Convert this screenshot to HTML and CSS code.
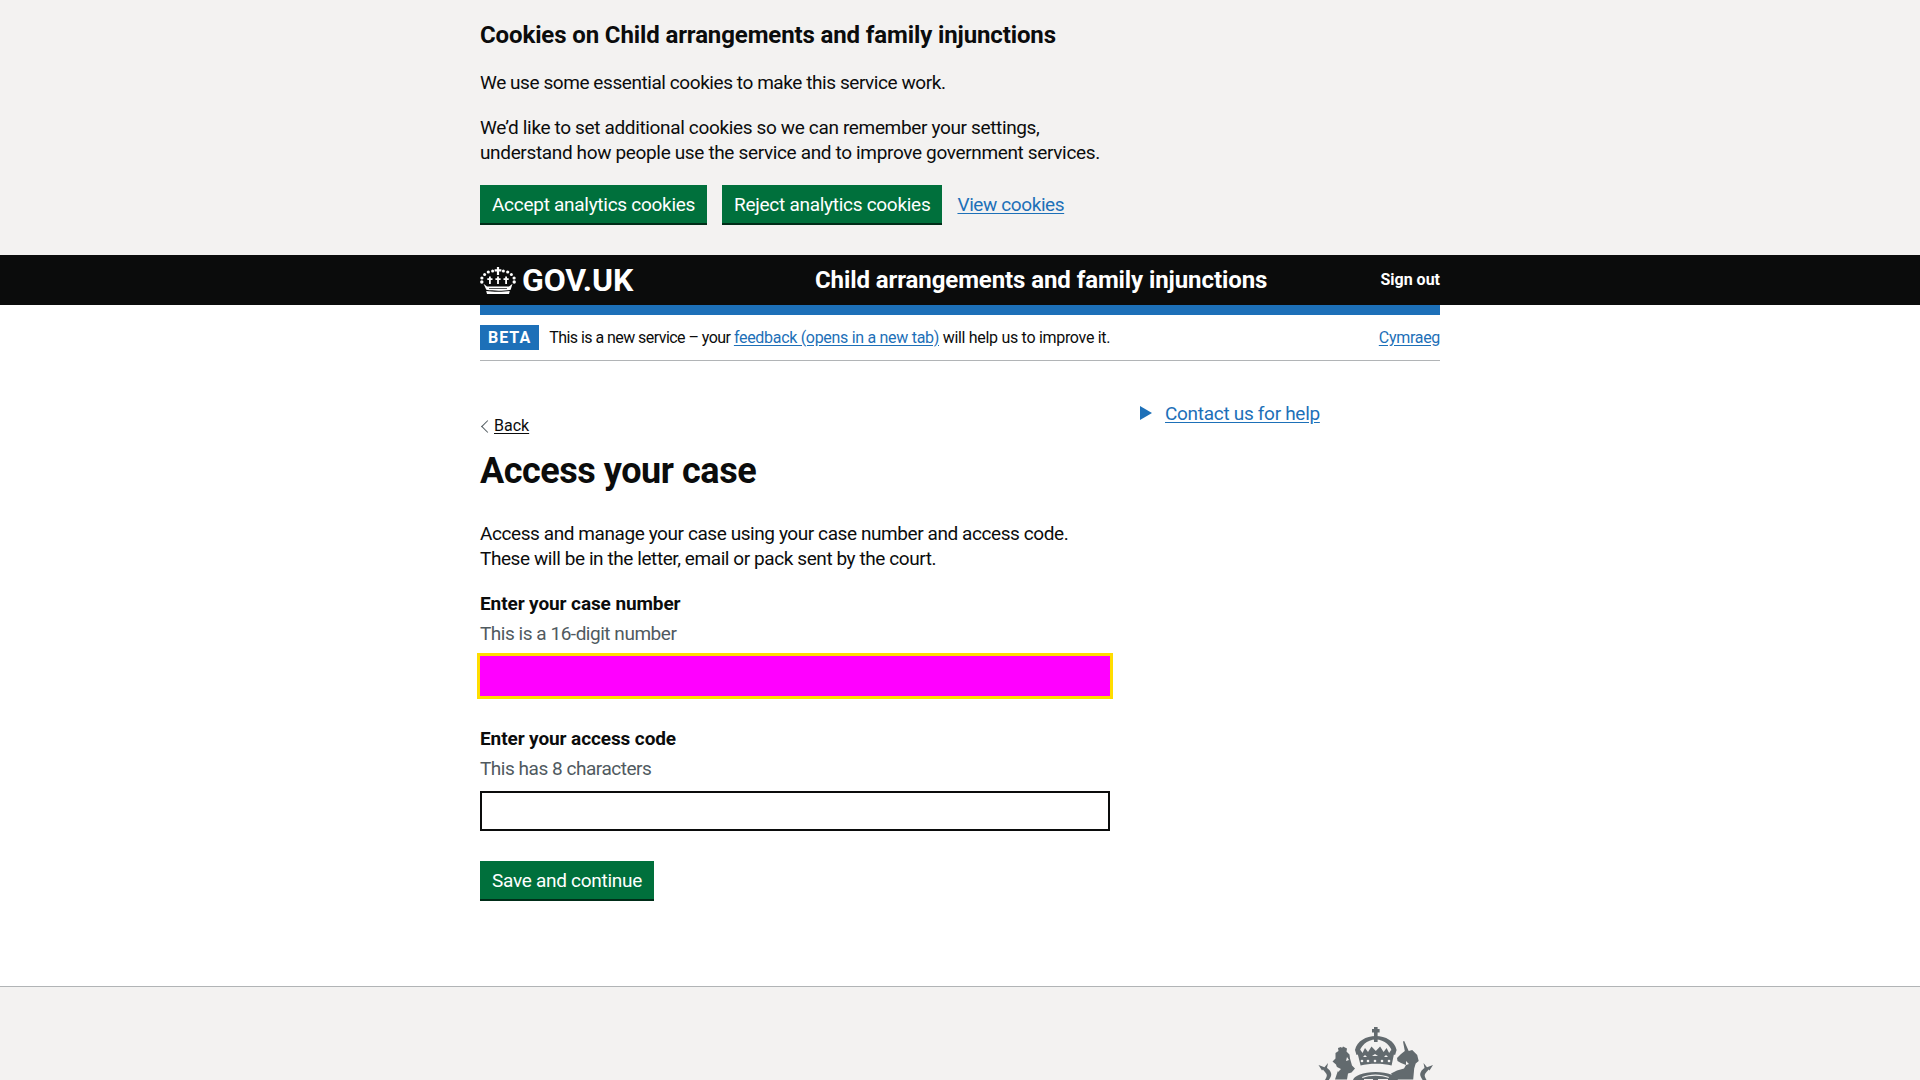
FILE: index.html
```html
<!DOCTYPE html>
<html lang="en">
<head>
<meta charset="utf-8">
<title>Access your case</title>
<link rel="stylesheet" href="styles.css">
</head>
<body>
<section class="cookie">
  <div class="width cookie-inner">
    <h2 class="cookie-title">Cookies on Child arrangements and family injunctions</h2>
    <p class="body cookie-first">We use some essential cookies to make this service work.</p>
    <p class="body">We’d like to set additional cookies so we can remember your settings,<br>understand how people use the service and to improve government services.</p>
    <div class="cookie-actions">
      <a class="btn">Accept analytics cookies</a>
      <a class="btn">Reject analytics cookies</a>
      <a class="link">View cookies</a>
    </div>
  </div>
</section>
<header class="header">
  <div class="width header-inner">
    <a class="logo">
      <svg class="crown" viewBox="0 0 36 27" width="36" height="27" aria-hidden="true">
        <g fill="#fff">
          <path d="M16.900 0h2.200v2.200h2.300v2.200h-2.300v3.600h-2.200V4.400h-2.300V2.200h2.300z"/>
          <circle cx="12.600" cy="4" r="1.500"/><circle cx="23.400" cy="4" r="1.500"/>
          <circle cx="8.300" cy="5" r="1.600"/><circle cx="27.700" cy="5" r="1.600"/>
          <circle cx="4.600" cy="7.500" r="1.500"/><circle cx="31.400" cy="7.500" r="1.500"/>
          <circle cx="1.900" cy="11" r="1.600"/><circle cx="34.100" cy="11" r="1.600"/>
          <circle cx="1.800" cy="15" r="1.700"/><circle cx="34.200" cy="15" r="1.700"/>
          <path d="M9 9.500h1.800v1.800h1.700v1.700h-1.700v4H9v-4H7.300v-1.700H9zM17.100 9.500h1.800v1.800h1.700v1.700h-1.700v4h-1.800v-4h-1.700v-1.700h1.700zM25.200 9.500H27v1.800h1.700v1.700H27v4h-1.800v-4h-1.700v-1.700h1.700z"/>
          <path d="M3.500 16.800l3.500 2.700h22l3.500-2.700-1.800 6c-7 1.200-17.400 1.200-24.400 0z"/>
          <path d="M6.200 23.900c7 1.100 16.600 1.100 23.600 0L29 27H7z"/>
        </g>
        <g fill="#0b0c0c">
          <path d="M9 21h18v.7H9z"/>
        </g>
      </svg>
      <span class="logo-text">GOV.UK</span>
    </a>
    <a class="service">Child arrangements and family injunctions</a>
    <a class="signout">Sign out</a>
  </div>
</header>
<div class="width">
  <div class="bluebar"></div>
  <div class="phase">
    <strong class="tag">BETA</strong>
    <span class="phase-text"><span class="phase-lead">This is a new service – your </span><a class="link">feedback (opens in a new tab)</a> will help us to improve it.</span>
    <a class="link lang">Cymraeg</a>
  </div>
  <div class="columns">
    <main class="main">
      <a class="back">Back</a>
      <h1 class="title">Access your case</h1>
      <p class="body intro">Access and manage your case using your case number and access code.<br>These will be in the letter, email or pack sent by the court.</p>
      <div class="group">
        <label class="label">Enter your case number</label>
        <div class="hint">This is a 16-digit number</div>
        <div class="input input-focus"></div>
      </div>
      <div class="group">
        <label class="label">Enter your access code</label>
        <div class="hint">This has 8 characters</div>
        <div class="input"></div>
      </div>
      <a class="btn">Save and continue</a>
    </main>
    <aside class="side">
      <span class="arrow"></span>
      <a class="link">Contact us for help</a>
    </aside>
  </div>
</div>
<footer class="footer">
  <div class="width footer-inner">
    <svg class="crest" viewBox="0 0 130 60" width="130" height="60" aria-hidden="true">
      <g fill="#626a6e">
        <path d="M64 7h3.600v2h2v3.400h-2V22H64v-9.600h-2V9h2z"/>
        <path d="M65.800 16C56 16 47 21 45 30l1.500 5 2.700-1C50 26 57 19.500 65.800 19.500S81.600 26 82.400 34l2.700 1 1.500-5C84.600 21 75.600 16 65.800 16z"/>
        <path d="M47 31l3.500-1 2 3 2.500-5 3 4 3.500-5.500 4.300 4.500 4.300-4.500 3.500 5.500 3-4 2.500 5 2-3 3.500 1-3 14.500c-9-2.500-22-2.500-31 0z"/>
        <path d="M25.500 33l3-2-.5-3 3-1 1 1 1-1.500 2 1 2 1-.5 3 3 3 .5 4 2 7 3 3-3.500 4-3.500 1-1 6H25l3-9-2-6-3.500-3 3-3z"/>
        <path d="M93 21.500l1.200-.5 4.500 10 3.500-1 5 5 1.500 6-3 2.500-1.500 5-1 11H84l-3-6 6-3 7-2 2-3.500-5-2-3.500-2-.5-3 4-4 3.800-3z"/>
        <path d="M8.500 45l6 2.300 3.500-4.300-1 5c3 2 5 5 4 8-.5 2-2 3-2 4h-4c1-2 2.500-4 1.500-6-.8-1.500-2.500-3-3.500-4.500l-1 1z"/>
        <path d="M123 45l-6 2.300-3.500-4.300 1 5c-3 2-5 5-4 8 .5 2 2 3 2 4h4c-1-2-2.500-4-1.500-6 .8-1.500 2.500-3 3.500-4.500l1 1z"/>
        <path d="M43 60c1-4 10-8 22.500-8S87 56 88 60z"/>
      </g>
      <g fill="#f3f2f1">
        <circle cx="52" cy="41" r="1.300"/><circle cx="58" cy="41" r="1.300"/><circle cx="65" cy="41" r="1.300"/><circle cx="72" cy="41" r="1.300"/><circle cx="79" cy="41" r="1.300"/>
        <path d="M53 37l2-2 2 2zM62 36l3-2 3 2zM74 37l2-2 2 2z"/>
        <path d="M52 57c8-3.500 19-3.500 27 0l-.5 1c-8-3-18-3-26 0z"/>
        <path d="M54 60h9v-1h-9zM68 60h10v-1H68z"/>
        <path d="M25 46l6 3-3 3zM37 37l2 3-3 1zM96 41l3 3-3 1z"/>
      </g>
    </svg>
  </div>
</footer>
</body>
</html>
```
FILE: styles.css
```css
* { box-sizing: border-box; }
html, body { margin: 0; height: 100%; overflow: hidden; }
body {
  font-family: Roboto, "Noto Sans", Arial, sans-serif;
  font-size: 19px;
  line-height: 25px;
  color: #0b0c0c;
  background: #fff;
  display: flex;
  flex-direction: column;
}
.width { width: 960px; margin: 0 auto; }
.link { color: #1d70b8; text-decoration: underline; text-underline-offset: 2px; letter-spacing: -0.3px; }
.body { margin: 0 0 20px; letter-spacing: -0.35px; }
.cookie-first { letter-spacing: -0.43px; }

.cookie { background: #f3f2f1; height: 255px; flex: none; }
.cookie-inner { padding-top: 20px; }
.cookie-title { margin: 0 0 20px; font-size: 24px; line-height: 30px; font-weight: 700; letter-spacing: -0.12px; }
.cookie-actions { display: flex; align-items: flex-start; gap: 15px; }
.cookie-actions .link { line-height: 40px; letter-spacing: -0.4px; }

.btn {
  display: inline-block;
  height: 40px;
  padding: 7px 12px 5px;
  background: #00703c;
  color: #fff;
  border-bottom: 2px solid #002d18;
  line-height: 25px;
  letter-spacing: -0.28px;
}

.header { background: #0b0c0c; height: 50px; flex: none; color: #fff; }
.header-inner { height: 50px; display: flex; align-items: center; position: relative; }
.logo { display: flex; align-items: center; gap: 6px; width: 200px; }
.crown { display: block; }
.logo-text { font-size: 32px; line-height: 30px; font-weight: 700; letter-spacing: -0.1px; }
.service { font-size: 24px; font-weight: 700; line-height: 30px; margin-left: 135px; letter-spacing: -0.09px; }
.signout { font-size: 16px; font-weight: 700; margin-left: auto; margin-top: -1px; }

.bluebar { height: 10px; background: #1d70b8; }
.phase {
  display: flex;
  align-items: center;
  height: 46px;
  border-bottom: 1px solid #b1b4b6;
  font-size: 16px;
  line-height: 20px;
}
.phase-text { letter-spacing: -0.3px; }
.phase-lead { letter-spacing: -0.55px; }
.tag {
  background: #1d70b8;
  color: #fff;
  font-size: 16px;
  font-weight: 700;
  letter-spacing: 1px;
  height: 25px;
  line-height: 25px;
  padding: 0 8px;
  margin-right: 10px;
}
.lang { margin-left: auto; }

.columns { display: flex; }
.main { width: 630px; margin-right: 30px; padding-top: 55px; }
.side { padding-top: 40px; display: flex; align-items: flex-start; gap: 13px; }
.arrow {
  width: 0; height: 0;
  margin-top: 5px;
  border-left: 12px solid #1d70b8;
  border-top: 7px solid transparent;
  border-bottom: 7px solid transparent;
}
.back {
  display: block;
  font-size: 16px;
  line-height: 20px;
  padding-left: 14px;
  position: relative;
  text-decoration: underline;
  text-underline-offset: 2px;
}
.back::before {
  content: "";
  position: absolute;
  left: 3px;
  top: 6px;
  width: 8px;
  height: 8px;
  border-left: 1px solid #505a5f;
  border-bottom: 1px solid #505a5f;
  transform: rotate(45deg);
}
.title { margin: 15px 0 30px; font-size: 36px; line-height: 40px; font-weight: 700; letter-spacing: -0.46px; }
.intro { margin-bottom: 20px; letter-spacing: -0.42px; }
.group { margin-bottom: 30px; }
.label { display: block; font-weight: 700; margin-bottom: 5px; letter-spacing: -0.1px; }
.hint { color: #505a5f; margin-bottom: 10px; letter-spacing: -0.47px; }
.input { height: 40px; border: 2px solid #0b0c0c; background: #fff; }
.input-focus { background: #f0f; border: 0; outline: 3px solid #fd0; }

.footer {
  flex: 1;
  background: #f3f2f1;
  border-top: 1px solid #b1b4b6;
  margin-top: 85px;
  overflow: hidden;
}
.footer-inner { display: flex; justify-content: flex-end; padding-top: 33px; }
.crest { display: block; flex: none; }
```
